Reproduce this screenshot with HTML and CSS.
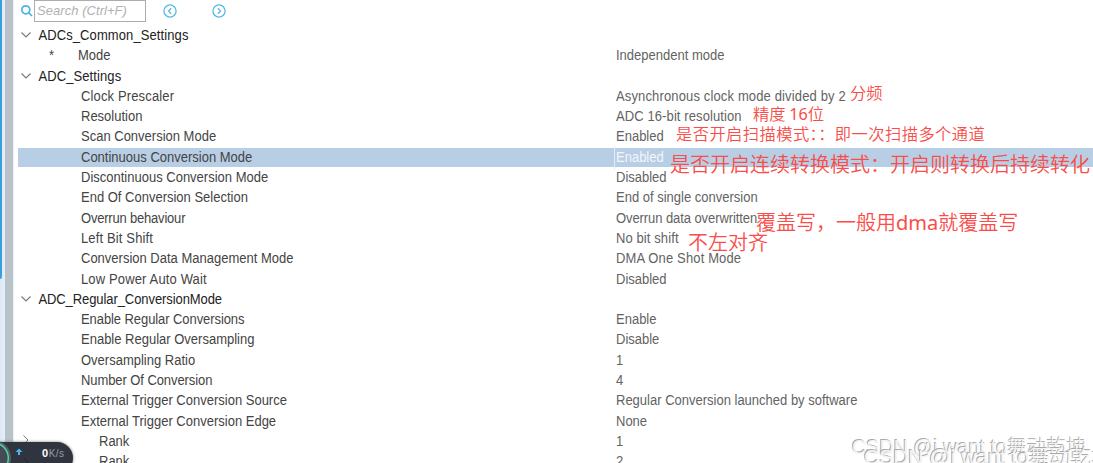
FILE: index.html
```
<!DOCTYPE html>
<html lang="zh-CN">
<head>
<meta charset="utf-8">
<title>ADC Settings</title>
<link rel="stylesheet" href="styles.css">
</head>
<body>
<div class="app">
  <div class="rail"><div class="rail-thumb"></div></div>
  <div class="divider"></div>
  <main class="panel">
    <div class="toolbar">
      <svg class="mag" viewBox="0 0 14 14"><circle cx="5.8" cy="5.8" r="4"/><path d="M8.8 8.8L12 12"/></svg>
      <div class="search">Search (Ctrl+F)</div>
      <svg class="nav prev" viewBox="0 0 14 14"><circle cx="7" cy="7" r="6.1"/><path d="M8.2 4.3L5.6 7L8.2 9.7"/></svg>
      <svg class="nav next" viewBox="0 0 14 14"><circle cx="7" cy="7" r="6.1"/><path d="M5.9 4.3L8.5 7L5.9 9.7"/></svg>
    </div>
    <div class="tree">
      <div class="row group"><svg class="chev" viewBox="0 0 12 8"><path d="M1.5 1.5L6 6L10.5 1.5"/></svg><span class="name loose">ADCs_Common_Settings</span></div>
      <div class="row mode"><span class="name"><span class="star">*</span>Mode</span><span class="value">Independent mode</span></div>
      <div class="row group"><svg class="chev" viewBox="0 0 12 8"><path d="M1.5 1.5L6 6L10.5 1.5"/></svg><span class="name loose">ADC_Settings</span></div>
      <div class="row"><span class="name looser">Clock Prescaler</span><span class="value looser">Asynchronous clock mode divided by 2</span></div>
      <div class="row"><span class="name">Resolution</span><span class="value loose">ADC 16-bit resolution</span></div>
      <div class="row"><span class="name">Scan Conversion Mode</span><span class="value">Enabled</span></div>
      <div class="row selected"><span class="name">Continuous Conversion Mode</span><span class="value">Enabled</span></div>
      <div class="row"><span class="name">Discontinuous Conversion Mode</span><span class="value">Disabled</span></div>
      <div class="row"><span class="name">End Of Conversion Selection</span><span class="value">End of single conversion</span></div>
      <div class="row"><span class="name tighter">Overrun behaviour</span><span class="value tight">Overrun data overwritten</span></div>
      <div class="row"><span class="name looser">Left Bit Shift</span><span class="value loose">No bit shift</span></div>
      <div class="row"><span class="name">Conversion Data Management Mode</span><span class="value looser">DMA One Shot Mode</span></div>
      <div class="row"><span class="name looser">Low Power Auto Wait</span><span class="value">Disabled</span></div>
      <div class="row group"><svg class="chev" viewBox="0 0 12 8"><path d="M1.5 1.5L6 6L10.5 1.5"/></svg><span class="name tight">ADC_Regular_ConversionMode</span></div>
      <div class="row"><span class="name tight">Enable Regular Conversions</span><span class="value">Enable</span></div>
      <div class="row"><span class="name">Enable Regular Oversampling</span><span class="value">Disable</span></div>
      <div class="row"><span class="name">Oversampling Ratio</span><span class="value">1</span></div>
      <div class="row"><span class="name tight">Number Of Conversion</span><span class="value">4</span></div>
      <div class="row"><span class="name">External Trigger Conversion Source</span><span class="value">Regular Conversion launched by software</span></div>
      <div class="row"><span class="name">External Trigger Conversion Edge</span><span class="value">None</span></div>
      <div class="row rank"><svg class="chev-right" viewBox="0 0 8 12"><path d="M1.5 1.5L6 6L1.5 10.5"/></svg><span class="name">Rank</span><span class="value">1</span></div>
      <div class="row rank"><svg class="chev-right" viewBox="0 0 8 12"><path d="M1.5 1.5L6 6L1.5 10.5"/></svg><span class="name">Rank</span><span class="value">2</span></div>
    </div>
  </main>

  <div class="note small n1">分频</div>
  <div class="note small n2">精度 <span class="latin">16</span>位</div>
  <div class="note small n3">是否开启扫描模式：：即一次扫描多个通道</div>
  <div class="note n4">是否开启连续转换模式：开启则转换后持续转化</div>
  <div class="note n5">覆盖写，一般用<span class="latin">dma</span>就覆盖写</div>
  <div class="note n6">不左对齐</div>

  <div class="mark m1">CSDN @i want to舞动乾坤</div>
  <div class="mark m2">CSDN @i want to舞动乾坤</div>

  <div class="speed">
    <svg class="gauge" viewBox="0 0 14 24"><circle cx="-7" cy="19" r="18" fill="#555c66"/><circle cx="-7" cy="19" r="15.3" fill="#454b56" stroke="#4bdc9c" stroke-width="1.4"/></svg>
    <svg class="up" viewBox="0 0 8 8"><path d="M4 .5L7.5 4H5V7H3V4H.5Z"/></svg>
    <span class="rate"><b>0</b>K/s</span>
    <svg class="ghost" viewBox="0 0 8 12"><path d="M1.5 1.5L6 6L1.5 10.5"/></svg>
  </div>
</div>
</body>
</html>
```
FILE: styles.css
```
* { box-sizing: border-box; }
body { margin: 0; background: #fff; }
.app {
  position: relative;
  display: flex;
  width: 1093px;
  height: 463px;
  overflow: hidden;
  font-family: "Liberation Sans", Arial, sans-serif;
  font-size: 13px;
  color: #444;
}
.rail { width: 2px; background: #dce9f6; flex: none; }
.rail-thumb { height: 279px; background: #38a0dc; border-radius: 0 0 2px 0; }
.divider {
  width: 12px;
  flex: none;
  border-left: 3px solid #e4edf5;
  border-right: 1px solid #edf0f2;
  background: #b7c3c9;
}
.panel { flex: 1; min-width: 0; padding-left: 4px; }
.toolbar { display: flex; height: 25px; padding-left: 2px; align-items: flex-start; }
.toolbar svg, .chev, .chev-right { fill: none; flex: none; }
.mag { width: 14px; height: 14px; margin-top: 4px; stroke: #4db2e4; stroke-width: 1.7; }
.search {
  width: 112px;
  height: 22px;
  border: 1px solid #a9adb2;
  line-height: 20px;
  padding-left: 2px;
  font-style: italic;
  letter-spacing: .05px;
  color: #b1b1b1;
  white-space: nowrap;
}
.nav { width: 14px; height: 14px; margin-top: 3.5px; stroke: #58b7e6; stroke-width: 1.3; }
.prev { margin-left: 17px; }
.next { margin-left: 35px; }
.row {
  display: grid;
  grid-template-columns: 597px 1fr;
  height: 20.31px;
  line-height: 21.6px;
  white-space: nowrap;
}
.name, .value { transform: scaleY(1.08); transform-origin: 50% 55%; }
.name { padding-left: 63px; }
.value { padding-left: 1px; color: #636363; }
.loose { letter-spacing: .1px; }
.looser { letter-spacing: .14px; }
.tight { letter-spacing: -.08px; }
.tighter { letter-spacing: -.2px; }
.group { display: flex; align-items: center; color: #222; }
.group .name { padding: 2px 0 0 6.4px; }
.chev { width: 12px; height: 8px; margin-left: 2px; stroke: #777; stroke-width: 1.1; }
.mode .name { padding-left: 31px; }
.star { display: inline-block; width: 29px; }
.selected {
  background: linear-gradient(#b8cee5, #b8cee5) 0 1px / 100% 19px no-repeat;
}
.selected .value { border-left: 1px solid #e2edf7; margin-left: -1px; color: #f2f6fa; }
.rank { grid-template-columns: 9px 588px 1fr; }
.rank .name { padding-left: 72px; }
.chev-right { width: 8px; height: 12px; margin: 3px 0 0 4px; stroke: #777; stroke-width: 1; }
.note {
  position: absolute;
  font-family: "Noto Sans CJK SC", sans-serif;
  font-weight: 350;
  font-size: 20px;
  line-height: 24px;
  color: #fa4c48;
  white-space: nowrap;
}
.small { font-size: 16.3px; line-height: 20px; }
.latin { font-family: "Noto Sans", sans-serif; font-weight: 400; }
.n1 { left: 850px; top: 82px; }
.n2 { left: 753px; top: 103px; }
.n3 { left: 676px; top: 123px; letter-spacing: .42px; }
.n4 { left: 670px; top: 152px; }
.n5 { left: 756px; top: 210px; }
.n6 { left: 688px; top: 230px; }
.mark {
  position: absolute;
  font-family: "Liberation Sans", "Noto Sans CJK SC", sans-serif;
  font-weight: 300;
  font-size: 19.8px;
  line-height: 24px;
  color: #f4f4f4;
  text-shadow: -1px -1px 0 #aaa;
  white-space: nowrap;
}
.m1 { left: 852px; top: 435px; }
.m2 { left: 864px; top: 445px; font-size: 21px; }
.speed {
  position: absolute;
  left: -14px;
  top: 442px;
  width: 87px;
  height: 32px;
  border-radius: 0 18px 18px 0;
  background: #30343f;
  box-shadow: 0 0 3px #777;
}
.gauge { position: absolute; left: 14px; top: -3px; width: 14px; height: 24px; }
.up { position: absolute; left: 29px; top: 6px; width: 8px; height: 8px; fill: #46b5ef; }
.ghost { position: absolute; left: 36px; top: 14px; width: 8px; height: 12px; fill: none; stroke: #22252d; }
.rate { position: absolute; left: 56px; top: 4px; font-size: 10px; line-height: 15px; color: #969aa1; letter-spacing: .5px; }
.rate b { font-size: 11px; color: #fff; }
```
